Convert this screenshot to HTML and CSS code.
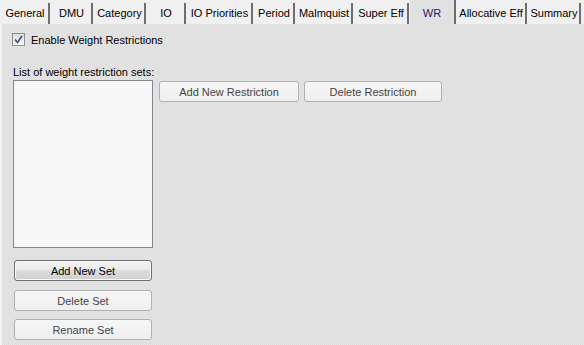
FILE: index.html
```html
<!DOCTYPE html>
<html lang="en">
<head>
    <meta charset="UTF-8">
    <title>Weight Restrictions</title>
    <link rel="stylesheet" href="styles.css">
</head>
<body>

    <div class="tabs">
        <div class="tab t-general">General</div>
        <div class="tab t-dmu">DMU</div>
        <div class="tab t-category">Category</div>
        <div class="tab t-io">IO</div>
        <div class="tab t-iop">IO Priorities</div>
        <div class="tab t-period">Period</div>
        <div class="tab t-malm">Malmquist</div>
        <div class="tab t-super">Super Eff</div>
        <div class="tab active t-wr">WR</div>
        <div class="tab t-alloc">Allocative Eff</div>
        <div class="tab t-summary">Summary</div>
    </div>

    <div class="panel">
        <label class="check-row">
            <span class="checkbox">
                <svg width="9" height="9" viewBox="0 0 9 9"><path d="M1 4.5 L3.5 7.5 L8 1" fill="none" stroke="#3b4f8a" stroke-width="1.6"/></svg>
            </span>
            Enable Weight Restrictions
        </label>

        <div class="list-label">List of weight restriction sets:</div>

        <div class="columns">
            <div class="left">
                <div class="listbox"></div>
                <button class="btn default">Add New Set</button>
                <button class="btn disabled">Delete Set</button>
                <button class="btn disabled">Rename Set</button>
            </div>
            <div class="right">
                <button class="btn disabled wide">Add New Restriction</button>
                <button class="btn disabled wide2">Delete Restriction</button>
            </div>
        </div>
    </div>

</body>
</html>
```

FILE: styles.css
```css
body {
    margin: 0;
    width: 584px;
    height: 345px;
    overflow: hidden;
    font-family: 'Liberation Sans', Arial, sans-serif;
    font-size: 11px;
    color: #000;
    background-color: #f0f0f0;
}

.tabs {
    display: flex;
    height: 24px;
    padding-left: 2px;
    align-items: flex-end;
    gap: 2px;
}

.tab {
    height: 21px;
    line-height: 21px;
    text-align: center;
    white-space: nowrap;
    overflow: hidden;
    background-color: #f0f0f0;
    border-right: 2px solid #6e6e6e;
    box-sizing: border-box;
    font-size: 11px;
}

.tab.active {
    height: 24px;
    line-height: 26px;
    border-right: 2px solid #6e6e6e;
    background-color: #e2e2e2;
    background-image: conic-gradient(#e6e6e6 25%, #dcdcdc 0 50%, #e6e6e6 0 75%, #dcdcdc 0);
    background-size: 2px 2px;
    color: #1a1a6a;
}

.t-general { width: 48px; }
.t-dmu { width: 41px; }
.t-category { width: 51px; }
.t-io { width: 38px; }
.t-iop { width: 65px; }
.t-period { width: 40px; }
.t-malm { width: 56px; }
.t-super { width: 54px; margin-right: -1px; }
.t-wr { width: 46px; }
.t-alloc { width: 70px; margin-left: -1px; }
.t-summary { width: 52px; }

.panel {
    height: 321px;
    box-sizing: border-box;
    border-left: 2px solid #f4f4f4;
    background-color: #e2e2e2;
    background-image: conic-gradient(#e6e6e6 25%, #dcdcdc 0 50%, #e6e6e6 0 75%, #dcdcdc 0);
    background-size: 2px 2px;
    padding: 9px 0 0 10px;
}

.check-row {
    display: flex;
    align-items: center;
    gap: 6px;
    height: 13px;
    font-size: 11px;
}

.checkbox {
    width: 11px;
    height: 11px;
    border: 1px solid #8e8f8f;
    background: linear-gradient(#dcdcdc, #f6f6f6);
    display: flex;
    align-items: center;
    justify-content: center;
}

.list-label {
    margin-top: 20px;
    margin-left: 1px;
    height: 13px;
    line-height: 13px;
}

.columns {
    display: flex;
    gap: 6px;
    margin-top: 1px;
}

.left {
    display: flex;
    flex-direction: column;
    width: 140px;
    margin-left: 1px;
}

.listbox {
    width: 140px;
    height: 168px;
    box-sizing: border-box;
    border: 1px solid #828790;
    background-color: #f7f7f7;
    margin-bottom: 12px;
}

.btn {
    font-family: 'Liberation Sans', Arial, sans-serif;
    font-size: 11px;
    height: 21px;
    box-sizing: border-box;
    border-radius: 3px;
    padding: 0;
    margin: 0 0 0 1px;
    width: 138px;
}

.btn.default {
    border: 1px solid #707070;
    background: linear-gradient(#f2f2f2 0%, #ebebeb 45%, #dddddd 50%, #cfcfcf 100%);
    color: #000;
    margin-bottom: 9px;
    box-shadow: inset 0 0 0 1px #f8f8f8;
}

.btn.disabled {
    border: 1px solid #adb2b5;
    background: linear-gradient(#f6f6f6, #efefef);
    color: #444;
    margin-bottom: 8px;
}

.right {
    display: flex;
    gap: 5px;
    padding-top: 1px;
    align-items: flex-start;
}

.btn.wide {
    width: 140px;
    margin: 0;
}

.btn.wide2 {
    width: 138px;
    margin: 0;
}
```
